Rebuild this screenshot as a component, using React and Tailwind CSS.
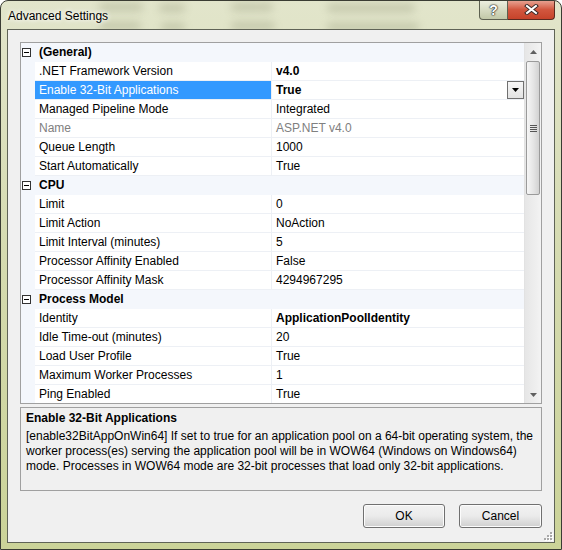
import React from 'react';

const rows = [
  { cat: '(General)' },
  { name: '.NET Framework Version', value: 'v4.0', bold: true },
  { name: 'Enable 32-Bit Applications', value: 'True', bold: true, selected: true },
  { name: 'Managed Pipeline Mode', value: 'Integrated' },
  { name: 'Name', value: 'ASP.NET v4.0', disabled: true },
  { name: 'Queue Length', value: '1000' },
  { name: 'Start Automatically', value: 'True' },
  { cat: 'CPU' },
  { name: 'Limit', value: '0' },
  { name: 'Limit Action', value: 'NoAction' },
  { name: 'Limit Interval (minutes)', value: '5' },
  { name: 'Processor Affinity Enabled', value: 'False' },
  { name: 'Processor Affinity Mask', value: '4294967295' },
  { cat: 'Process Model' },
  { name: 'Identity', value: 'ApplicationPoolIdentity', bold: true },
  { name: 'Idle Time-out (minutes)', value: '20' },
  { name: 'Load User Profile', value: 'True' },
  { name: 'Maximum Worker Processes', value: '1' },
  { name: 'Ping Enabled', value: 'True' },
];

// blurred content of the window behind the glass title bar
const ghosts = [
  { l: 98, t: 2, w: 44 }, { l: 158, t: 3, w: 26 }, { l: 230, t: 2, w: 42 }, { l: 326, t: 3, w: 88 },
  { l: 98, t: 21, w: 42 }, { l: 160, t: 22, w: 24 }, { l: 230, t: 21, w: 44 }, { l: 326, t: 22, w: 92 },
];

const MinusBox = () => (
  <div className="w-[9px] h-[9px] border border-[#333] bg-white flex items-center justify-center">
    <div className="w-[5px] h-px bg-black" />
  </div>
);

const Row = ({ r }) => {
  if (r.cat) {
    return (
      <div className="flex h-[19px] bg-[#f4f7fc] shrink-0">
        <div className="w-[14px] flex items-center pl-px">
          <MinusBox />
        </div>
        <div className="pl-[4px] leading-[19px] font-bold">{r.cat}</div>
      </div>
    );
  }
  return (
    <div className="flex h-[19px] shrink-0">
      <div className="w-[14px] bg-[#f4f7fc]" />
      <div
        className={`w-[237px] border-b border-r border-[#edf0f5] pl-[4px] leading-[19px] whitespace-nowrap overflow-hidden ${
          r.selected ? 'bg-[#3399ff] text-white' : r.disabled ? 'text-[#808080]' : 'text-black'
        }`}
      >
        {r.name}
      </div>
      <div
        className={`flex-1 flex border-b border-[#edf0f5] pl-[4px] leading-[19px] whitespace-nowrap overflow-hidden ${
          r.bold ? 'font-bold' : ''
        } ${r.disabled ? 'text-[#808080]' : 'text-black'}`}
      >
        <span className="flex-1">{r.value}</span>
        {r.selected && (
          <div className="w-[17px] h-[18px] border border-[#707070] bg-linear-to-b from-[#f7f7f7] to-[#e3e3e3] flex items-center justify-center">
            <svg width="7" height="4" viewBox="0 0 7 4">
              <path d="M0 0h7L3.5 4z" fill="#000" />
            </svg>
          </div>
        )}
      </div>
    </div>
  );
};

const Arrow = ({ down }) => (
  <svg width="7" height="4" viewBox="0 0 7 4">
    <path d={down ? 'M0 0h7L3.5 4z' : 'M0 4h7L3.5 0z'} fill="#606060" />
  </svg>
);

const Scrollbar = () => (
  <div className="w-[17px] flex flex-col bg-linear-to-r from-[#e6e6e6] to-[#f3f3f3] border-l border-[#e2e2e2]">
    <div className="h-[18px] flex items-center justify-center">
      <Arrow />
    </div>
    <div className="mx-px h-[134px] rounded-[2px] border border-[#9a9a9a] bg-linear-to-r from-[#f6f6f6] via-[#e6e6e6] to-[#d2d2d2] flex flex-col items-center justify-center gap-[1px]">
      {[0, 1, 2, 3].map((i) => (
        <div key={i} className="w-[7px] h-px bg-[#555]" />
      ))}
    </div>
    <div className="flex-1" />
    <div className="h-[17px] flex items-center justify-center">
      <Arrow down />
    </div>
  </div>
);

const DlgButton = ({ label, w }) => (
  <div
    className={`${w} h-[24px] rounded-[3px] border border-[#707070] bg-linear-to-b from-[#f2f2f2] via-[#ebebeb] to-[#cfcfcf] flex items-center justify-center text-black shadow-[inset_0_0_0_1px_#fcfcfc]`}
  >
    {label}
  </div>
);

export default function App() {
  return (
    <div className="w-[562px] h-[550px] flex flex-col rounded-t-[8px] border border-[#3a3c33] bg-linear-to-b from-[#e2e5cb] via-[#d4daae] to-[#cbd398] font-['Liberation_Sans',Arial,sans-serif] text-[12px] text-black overflow-hidden relative">
      {ghosts.map((g, i) => (
        <div
          key={i}
          className="absolute h-[8px] bg-[#7d8262] opacity-30 blur-[4px] rounded"
          style={{ left: g.l, top: g.t, width: g.w }}
        />
      ))}

      {/* title bar */}
      <div className="h-[28px] flex justify-between items-start relative">
        <div className="pl-[7px] pt-[7px] leading-[16px] text-[12px] [text-shadow:0_0_6px_#fff,0_0_4px_#fff]">
          Advanced Settings
        </div>
        <div className="flex mr-[6px] -mt-px">
          <div className="w-[29px] h-[20px] rounded-bl-[4px] border border-[#5d6050] border-t-0 bg-linear-to-b from-[#eef0e2] via-[#d8dcc4] to-[#c2c8a8] flex items-center justify-center">
            <span className="font-bold text-[14px] leading-none text-white [text-shadow:0_0_1px_#222,0_0_1px_#222,0_0_2px_#222]">?</span>
          </div>
          <div className="w-[47px] h-[20px] rounded-br-[4px] border border-[#5a2a20] border-t-0 border-l-0 bg-linear-to-b from-[#e8a899] via-[#d2573f] to-[#c6432a] flex items-center justify-center">
            <svg width="15" height="11" viewBox="0 0 15 11">
              <path d="M3 2L12 9M12 2L3 9" stroke="#3a2a28" strokeWidth="4" strokeLinecap="square" />
              <path d="M3 2L12 9M12 2L3 9" stroke="#fff" strokeWidth="2" strokeLinecap="square" />
            </svg>
          </div>
        </div>
      </div>

      {/* client area */}
      <div className="mx-[6px] h-[514px] border border-[#5f6356] bg-[#f0f0f0] px-[12px] pt-[12px] pb-[14px] flex flex-col relative">
        {/* property grid */}
        <div className="h-[362px] border border-[#a0a0a0] bg-white flex overflow-hidden">
          <div className="flex-1 flex flex-col overflow-hidden">
            {rows.map((r, i) => (
              <Row key={i} r={r} />
            ))}
          </div>
          <Scrollbar />
        </div>

        {/* description */}
        <div className="mt-[3px] h-[84px] border border-[#a0a0a0] pl-[5px] pt-[3px]">
          <div className="font-bold leading-[15px] mb-[3px]">Enable 32-Bit Applications</div>
          <div className="leading-[15px] whitespace-nowrap">
            [enable32BitAppOnWin64] If set to true for an application pool on a 64-bit operating system, the
          </div>
          <div className="leading-[15px] whitespace-nowrap">
            worker process(es) serving the application pool will be in WOW64 (Windows on Windows64)
          </div>
          <div className="leading-[15px] whitespace-nowrap">
            mode. Processes in WOW64 mode are 32-bit processes that load only 32-bit applications.
          </div>
        </div>

        {/* buttons */}
        <div className="mt-[13px] flex justify-end gap-[14px]">
          <DlgButton label="OK" w="w-[82px]" />
          <DlgButton label="Cancel" w="w-[83px]" />
        </div>

        {/* size grip */}
        <svg className="absolute right-px bottom-px" width="11" height="11" viewBox="0 0 11 11">
          {[[8, 2], [5, 5], [8, 5], [2, 8], [5, 8], [8, 8]].map(([x, y], i) => (
            <g key={i}>
              <rect x={x + 1} y={y + 1} width="2" height="2" fill="#fff" />
              <rect x={x} y={y} width="2" height="2" fill="#a8a8a8" />
            </g>
          ))}
        </svg>
      </div>
    </div>
  );
}
